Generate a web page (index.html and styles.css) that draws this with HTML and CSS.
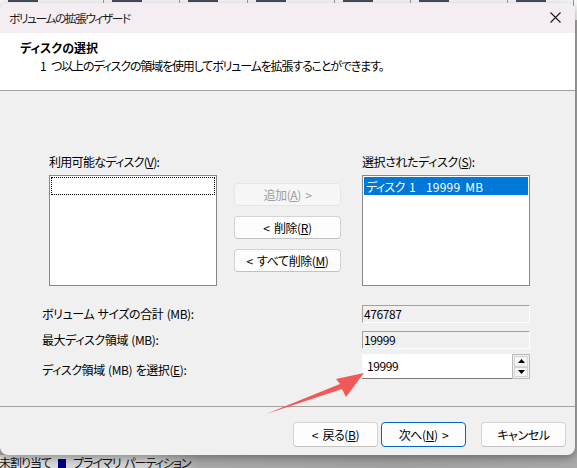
FILE: index.html
```html
<!DOCTYPE html>
<html lang="ja">
<head>
<meta charset="utf-8">
<title>ボリュームの拡張ウィザード</title>
<link rel="stylesheet" href="styles.css">
</head>
<body>
<div class="desk">
  <div class="app-header">
    <div class="hcell c1"><i></i></div>
    <div class="hcell c2"><i></i></div>
    <div class="hcell c3"><i></i></div>
    <div class="hcell c4"><i></i></div>
    <div class="hcell c5"><i></i></div>
    <div class="hcell c6"><i></i></div>
    <div class="hcell c7"><i></i></div>
    <div class="hcell c8"></div>
  </div>
  <div class="app-spacer"></div>
  <div class="legend"><span class="lg-text">未割り当て</span><span class="swatch"></span><span class="lg-text">プライマリ パーティション</span></div>

  <div class="dialog">
    <div class="titlebar">
      <span class="title">ボリュームの拡張ウィザード</span>
      <svg class="close" width="11" height="11" viewBox="0 0 11 11"><path d="M0.5 0.5L10.5 10.5M10.5 0.5L0.5 10.5" stroke="#1a1a1a" stroke-width="1.1" fill="none"/></svg>
    </div>
    <div class="header">
      <div class="h-title">ディスクの選択</div>
      <div class="h-sub">1 つ以上のディスクの領域を使用してボリュームを拡張することができます。</div>
    </div>
    <div class="body">
      <div class="lists">
        <div class="col">
          <div class="label">利用可能なディスク(<u>V</u>):</div>
          <div class="listbox"><div class="focusrow"></div></div>
        </div>
        <div class="mid">
          <div class="btn disabled">追加(<u>A</u>) &gt;</div>
          <div class="btn">&lt; 削除(<u>R</u>)</div>
          <div class="btn">&lt; すべて削除(<u>M</u>)</div>
        </div>
        <div class="col">
          <div class="label">選択されたディスク(<u>S</u>):</div>
          <div class="listbox"><div class="selrow"><span class="dname">ディスク 1</span><span class="dsize">19999 MB</span></div></div>
        </div>
      </div>
      <div class="rows">
        <div class="rlabel">ボリューム サイズの合計 (MB):</div>
        <div class="ro">476787</div>
        <div class="rlabel">最大ディスク領域 (MB):</div>
        <div class="ro">19999</div>
        <div class="rlabel">ディスク領域 (MB) を選択(<u>E</u>):</div>
        <div class="spin">
          <div class="spin-val">19999</div>
          <div class="spin-btns">
            <div class="sb"><svg width="7" height="4" viewBox="0 0 7 4"><path d="M3.5 0L7 4H0z" fill="#000"/></svg></div>
            <div class="sb"><svg width="7" height="4" viewBox="0 0 7 4"><path d="M0 0H7L3.5 4z" fill="#000"/></svg></div>
          </div>
        </div>
      </div>
    </div>
    <div class="footer">
      <div class="fbtn">&lt; 戻る(<u>B</u>)</div>
      <div class="fbtn primary">次へ(<u>N</u>) &gt;</div>
      <div class="fbtn cancel">キャンセル</div>
    </div>
  </div>

  <svg class="arrow" width="577" height="468" viewBox="0 0 577 468">
    <polygon points="266,414 340,384 336,379 364,373 346,397 342,389" fill="#f35757"/>
  </svg>
</div>
</body>
</html>
```

FILE: styles.css
```css
* { box-sizing: border-box; }
html, body { margin: 0; padding: 0; }
body {
  width: 577px;
  height: 468px;
  overflow: hidden;
  font-family: "Noto Sans CJK JP", "Noto Sans", sans-serif;
  font-size: 12px;
  font-feature-settings: "palt";
  letter-spacing: -0.4px;
  word-spacing: 1px;
  color: #000;
  background: #a8a8a8;
}
u { text-decoration: underline; text-underline-offset: 1px; }

.desk {
  position: relative;
  width: 577px;
  height: 468px;
  display: flex;
  flex-direction: column;
  overflow: hidden;
}

/* background application */
.app-header {
  height: 20px;
  display: flex;
  background: #f7f7f7;
}
.hcell {
  border-right: 1px solid #9a9a9a;
  position: relative;
}
.hcell i {
  position: absolute;
  left: 8px;
  top: 0;
  width: 30px;
  height: 2px;
  background: #4a4a60;
}
.c1 { width: 104px; }
.c2 { width: 76px; }
.c3 { width: 68px; }
.c4 { width: 87px; }
.c5 { width: 76px; }
.c6 { width: 97px; }
.c7 { width: 66px; }
.c8 { flex: 1; border-right: 0; }
.app-spacer { flex: 1; background: #a8a8a8; }
.legend {
  height: 16px;
  line-height: 16px;
  display: flex;
  align-items: center;
  gap: 7px;
  margin-left: -1px;
  margin-bottom: -3px;
  letter-spacing: -1px;
  word-spacing: 2px;
  background: linear-gradient(to right, #dedede 0, #d2d2d2 150px, #a9a9a9 200px, #a2a2a2 400px, #aaaaaa 100%);
  color: #111;
  white-space: nowrap;
}
.swatch {
  width: 8px;
  height: 9px;
  background: #000080;
}

/* dialog window */
.dialog {
  position: absolute;
  left: 0;
  top: 3px;
  width: 575px;
  height: 452px;
  border-radius: 8px;
  overflow: hidden;
  background: #f0f0f0;
  box-shadow: 0 3px 10px rgba(0, 0, 0, 0.35);
  display: flex;
  flex-direction: column;
}
.titlebar {
  height: 30px;
  flex: none;
  background: #f4eef3;
  display: flex;
  align-items: center;
  justify-content: space-between;
  padding: 0 14px 0 9px;
}
.title { color: #1b1b1b; font-size: 11.8px; letter-spacing: -1.5px; margin-top: -2px; }
.close { display: block; margin-top: -1px; }

.header {
  height: 58px;
  flex: none;
  background: #fff;
  border-bottom: 1px solid #a0a0a0;
  padding: 7px 0 0 20px;
  line-height: 16px;
}
.h-title { font-weight: bold; letter-spacing: 0; }
.h-sub { margin-top: 2px; padding-left: 20px; letter-spacing: -1.15px; word-spacing: 4px; }

.body {
  flex: 1;
  padding-top: 63px;
}
.lists {
  display: flex;
  padding-left: 49px;
}
.col { width: 168px; }
.label { height: 16px; line-height: 16px; margin-bottom: 5px; white-space: nowrap; }
.col:first-child .label { letter-spacing: -0.7px; }
.listbox {
  height: 111px;
  background: #fff;
  border: 1px solid #828790;
  padding: 1px;
}
.focusrow {
  height: 18px;
  border: 1px dotted #000;
}
.selrow {
  height: 18px;
  background: #0078d7;
  color: #fff;
  display: flex;
  align-items: center;
  padding-left: 2px;
  white-space: nowrap;
}
.dname { flex: none; width: 60px; letter-spacing: -0.6px; word-spacing: 2px; }
.dsize { flex: none; letter-spacing: 0.2px; word-spacing: 2px; }

.mid {
  width: 107px;
  margin: 0 21px 0 17px;
  padding-top: 29px;
  display: flex;
  flex-direction: column;
  gap: 10px;
}
.btn {
  height: 23px;
  line-height: 21px;
  text-align: center;
  background: #fdfdfd;
  border: 1px solid #d3d3d3;
  border-bottom-color: #c2c2c2;
  border-radius: 4px;
  white-space: nowrap;
  word-spacing: 2px;
}
.btn.disabled {
  background: #f6f6f6;
  border-color: #e6e6e6;
  color: #9d9d9d;
}

.rows {
  margin-top: 19px;
  padding-left: 42px;
  display: grid;
  grid-template-columns: 320px 168px;
  grid-template-rows: 18px 18px 25px;
  row-gap: 8px;
  align-items: center;
}
.rows .rlabel { line-height: 16px; white-space: nowrap; }
.ro {
  height: 18px;
  line-height: 16px;
  border-top: 1px solid #a0a0a0;
  border-left: 1px solid #a0a0a0;
  border-right: 1px solid #fff;
  border-bottom: 1px solid #fff;
  padding-left: 1px;
  background: #f0f0f0;
}
.spin {
  height: 25px;
  margin-top: -6px;
  display: flex;
}
.spin-val {
  flex: 1;
  background: #fff;
  border-bottom: 1px solid #7a7a7a;
  padding-left: 5px;
  line-height: 24px;
}
.spin-btns {
  width: 18px;
  border: 1px solid #b9b9b9;
  background: #f0f0f0;
  padding: 1px;
  display: flex;
  flex-direction: column;
}
.sb {
  flex: 1;
  border: 1px solid #d4d4d4;
  background: #f6f6f6;
  display: flex;
  align-items: center;
  justify-content: center;
}
.sb svg { display: block; }

.footer {
  height: 49px;
  flex: none;
  border-top: 1px solid #a0a0a0;
  display: flex;
  justify-content: flex-end;
  align-items: flex-start;
  padding: 15px 9px 0 0;
}
.fbtn {
  width: 85px;
  height: 25px;
  line-height: 23px;
  text-align: center;
  background: #fdfdfd;
  border: 1px solid #d3d3d3;
  border-bottom-color: #c2c2c2;
  border-radius: 4px;
  margin-left: 3px;
  white-space: nowrap;
  word-spacing: 2px;
}
.fbtn.primary { border: 1px solid #0067c0; }
.fbtn.cancel { margin-left: 15px; }

.arrow {
  position: absolute;
  left: 0;
  top: 0;
  pointer-events: none;
}
```
